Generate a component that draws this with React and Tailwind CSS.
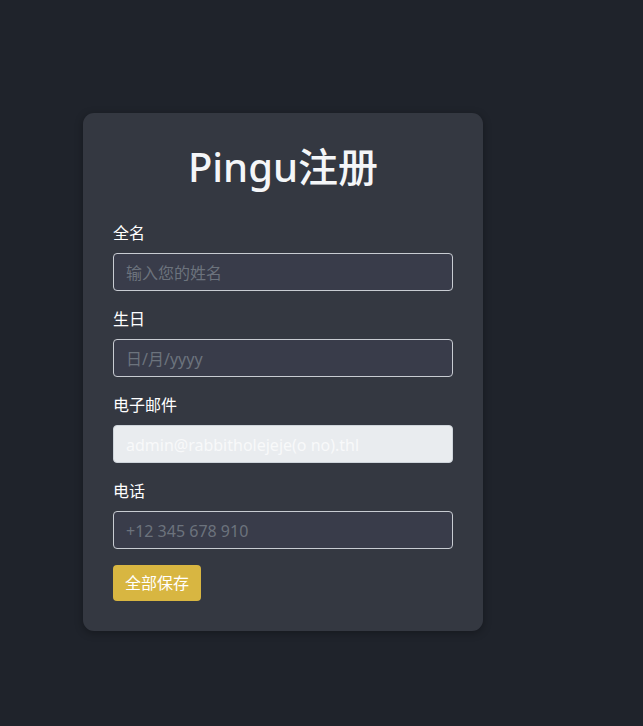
import React from "react";

const font = { fontFamily: '"Noto Sans", "Noto Sans CJK SC", sans-serif' };

function Field({ label, placeholder, disabled, value }) {
  return (
    <div className="mb-4">
      <label className="mb-2 block text-[16px] leading-6 text-white">{label}</label>
      {disabled ? (
        <div className="flex h-[38px] items-center rounded-[4px] border border-[#ced4da] bg-[#e9ecef] px-3 pt-[2px] text-[16px] text-[#f8f9fa]">
          {value}
        </div>
      ) : (
        <input
          placeholder={placeholder}
          className="block h-[38px] w-full rounded-[4px] border border-[#c8ccd2] bg-[#393c4a] px-3 pt-[2px] text-[16px] text-white outline-none placeholder:text-[#6c737d]"
          style={font}
        />
      )}
    </div>
  );
}

export default function App() {
  return (
    <div className="min-h-[726px] bg-[#1f232b] pl-[83px] pt-[113px]" style={font}>
      <div className="w-[400px] rounded-[11px] bg-[#343841] p-[30px] shadow-[0_2px_8px_rgba(0,0,0,0.3)]">
        <h1 className="mb-[30px] text-center text-[40px] font-medium leading-[48px] text-[#f4f6f8]">Pingu注册</h1>
        <Field label="全名" placeholder="输入您的姓名" />
        <Field label="生日" placeholder="日/月/yyyy" />
        <Field label="电子邮件" disabled value="admin@rabbitholejeje(o no).thl" />
        <Field label="电话" placeholder="+12 345 678 910" />
        <button className="flex h-9 items-center rounded-[4px] bg-[#d8b641] px-3 text-[16px] text-white">
          全部保存
        </button>
      </div>
    </div>
  );
}
